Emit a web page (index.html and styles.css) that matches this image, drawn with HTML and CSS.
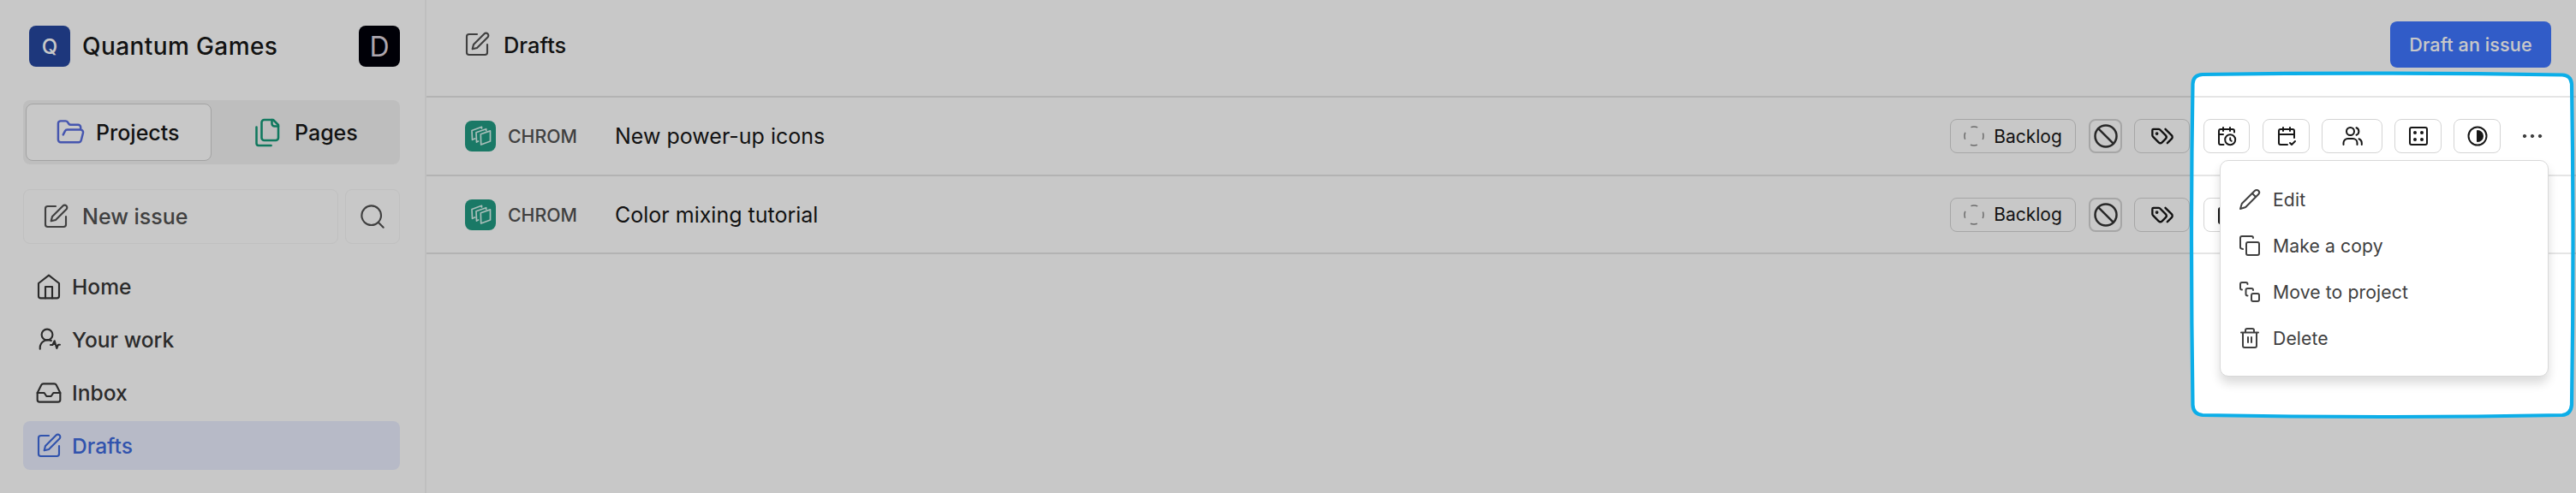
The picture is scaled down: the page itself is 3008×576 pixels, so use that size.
FILE: index.html
```html
<!DOCTYPE html>
<html lang="en">
<head>
<meta charset="utf-8">
<title>Drafts</title>
<link rel="stylesheet" href="styles.css">
</head>
<body>
<svg class="defs" width="0" height="0">
  <symbol id="compose" viewBox="0 0 24 24"><path d="M12 3H5a2 2 0 0 0-2 2v14a2 2 0 0 0 2 2h14a2 2 0 0 0 2-2v-7"/><path d="M18.375 2.625a2.121 2.121 0 1 1 3 3L12 15l-4 1 1-4Z"/></symbol>
  <symbol id="project" viewBox="0 0 36 36"><path d="M11.500 21 8.500 22.300 8 11.500 19.500 7.300V9M15.500 24 13.500 25 13 13.700 24.700 9.700V11.500M18.300 15.700 29.500 11.900V24L18.700 28Z"/></symbol>
  <symbol id="ban" viewBox="0 0 24 24"><circle cx="12" cy="12" r="10"/><path d="m4.900 4.900 14.200 14.200"/></symbol>
  <symbol id="tags" viewBox="0 0 24 24"><path d="m15 5 6.300 6.300a2.400 2.400 0 0 1 0 3.400L17 19"/><path d="M9.586 5.586A2 2 0 0 0 8.172 5H3a1 1 0 0 0-1 1v5.172a2 2 0 0 0 .586 1.414L8.290 18.290a2.426 2.426 0 0 0 3.420 0l3.580-3.580a2.426 2.426 0 0 0 0-3.420z"/><circle cx="6.500" cy="9.500" r=".6" fill="currentColor"/></symbol>
  <symbol id="cal-clock" viewBox="0 0 24 24"><path d="M21 7.500V6a2 2 0 0 0-2-2H5a2 2 0 0 0-2 2v14a2 2 0 0 0 2 2h3.500M16 2v4M8 2v4M3 10h5M17.700 17.800 16.200 16.500V14.300"/><circle cx="16.200" cy="16.300" r="6"/></symbol>
  <symbol id="cal-check" viewBox="0 0 24 24"><path d="M8 2v4M16 2v4M21 14V6a2 2 0 0 0-2-2H5a2 2 0 0 0-2 2v14a2 2 0 0 0 2 2h8M3 10h18M16 20l2 2 4-4"/></symbol>
</svg>

<div class="app">
  <aside class="sidebar">
    <header class="workspace">
      <span class="avatar">Q</span>
      <span class="workspace-name">Quantum Games</span>
      <span class="avatar avatar-user">D</span>
    </header>
    <div class="tabs">
      <span class="tab tab-active">
        <svg class="tab-icon folder" viewBox="0 0 24 24"><path d="m6 14 1.500-2.900A2 2 0 0 1 9.240 10H20a2 2 0 0 1 1.940 2.500l-1.540 6a2 2 0 0 1-1.950 1.500H4a2 2 0 0 1-2-2V5a2 2 0 0 1 2-2h3.900a2 2 0 0 1 1.690.9l.81 1.200a2 2 0 0 0 1.670.9H18a2 2 0 0 1 2 2v2"/></svg>
        Projects
      </span>
      <span class="tab tab-pages">
        <svg class="tab-icon files" viewBox="0 0 24 24"><path d="M20 7h-3a2 2 0 0 1-2-2V2"/><path d="M9 18a2 2 0 0 1-2-2V4a2 2 0 0 1 2-2h7l4 4v10a2 2 0 0 1-2 2Z"/><path d="M3 7.600v12.800A1.600 1.600 0 0 0 4.600 22h9.800"/></svg>
        Pages
      </span>
    </div>
    <div class="quick">
      <span class="new-issue"><svg class="icon-32"><use href="#compose"/></svg>New issue</span>
      <span class="search"><svg class="icon-32" viewBox="0 0 24 24"><circle cx="11" cy="11" r="8.500"/><path d="m21.500 21.500-4.500-4.500"/></svg></span>
    </div>
    <nav class="nav">
      <a class="nav-item"><svg class="icon-32" viewBox="0 0 24 24"><path d="m3 9 9-7 9 7v11a2 2 0 0 1-2 2H5a2 2 0 0 1-2-2z"/><path d="M9 22V12h6v10"/></svg>Home</a>
      <a class="nav-item"><svg class="icon-32" viewBox="0 0 24 24"><circle cx="10.500" cy="7.500" r="4.800"/><path d="M4.300 20v-1a6.800 6.800 0 0 1 9.800-6.200"/><path d="M13.500 16.500h1.800l1.700-3.500 2 6.500 1.200-3.200h1.500" fill="currentColor"/></svg>Your work</a>
      <a class="nav-item"><svg class="icon-32" viewBox="0 0 24 24"><path d="M22 12h-6l-2 3h-4l-2-3H2"/><path d="M5.450 5.110 2 12v6a2 2 0 0 0 2 2h16a2 2 0 0 0 2-2v-6l-3.450-6.890A2 2 0 0 0 16.760 4H7.240a2 2 0 0 0-1.790 1.110z"/></svg>Inbox</a>
      <a class="nav-item nav-active"><svg class="icon-32"><use href="#compose"/></svg>Drafts</a>
    </nav>
  </aside>

  <main class="main">
    <header class="topbar">
      <svg class="icon-32"><use href="#compose"/></svg>
      <h1 class="title">Drafts</h1>
      <button class="primary">Draft an issue</button>
    </header>
    <section class="row row-first">
      <span class="project"><svg><use href="#project"/></svg></span>
      <span class="key">CHROM</span>
      <span class="name">New power-up icons</span>
      <div class="props">
        <span class="chip state"><svg class="backlog" viewBox="0 0 24 24"><circle cx="12" cy="12" r="11"/></svg>Backlog</span>
        <span class="chip priority"><svg><use href="#ban"/></svg></span>
        <span class="chip labels"><svg><use href="#tags"/></svg></span>
        <span class="chip start"><svg><use href="#cal-clock"/></svg></span>
        <span class="chip due"><svg><use href="#cal-check"/></svg></span>
        <span class="chip members"><svg viewBox="0 0 24 24"><path d="M1.500 22v-2a5 5 0 0 1 5-5h6a5 5 0 0 1 5 5v2"/><circle cx="9.500" cy="6.500" r="4.500"/><path d="M16.500 2.300a4.500 4.500 0 0 1 0 8.400M19.500 15.300c2.200.8 3.300 2.700 3.300 4.700v2"/></svg></span>
        <span class="chip cycle"><svg viewBox="0 0 24 24"><rect x="2" y="2" width="20" height="20" rx="2"/><g fill="currentColor"><circle cx="8" cy="8" r="1"/><circle cx="16" cy="8" r="1"/><circle cx="8" cy="16" r="1"/><circle cx="16" cy="16" r="1"/></g></svg></span>
        <span class="chip module"><svg viewBox="0 0 24 24"><circle cx="12" cy="12" r="10.500"/><path d="M12 6a6 6 0 0 1 0 12z" fill="currentColor"/></svg></span>
        <span class="more"><svg viewBox="0 0 24 24"><circle cx="3" cy="12" r="1.700"/><circle cx="12" cy="12" r="1.700"/><circle cx="21" cy="12" r="1.700"/></svg></span>
      </div>
    </section>
    <section class="row">
      <span class="project"><svg><use href="#project"/></svg></span>
      <span class="key">CHROM</span>
      <span class="name">Color mixing tutorial</span>
      <div class="props">
        <span class="chip state"><svg class="backlog" viewBox="0 0 24 24"><circle cx="12" cy="12" r="11"/></svg>Backlog</span>
        <span class="chip priority"><svg><use href="#ban"/></svg></span>
        <span class="chip labels"><svg><use href="#tags"/></svg></span>
        <span class="chip start"><svg><use href="#cal-clock"/></svg></span>
        <span class="chip due"></span>
        <span class="chip members"></span>
        <span class="chip cycle"></span>
        <span class="chip module"></span>
        <span class="more"></span>
      </div>
    </section>
  </main>
</div>

<div class="menu">
  <a class="menu-item"><svg viewBox="0 0 24 24"><path d="M22.200 6a1 1 0 0 0-4.200-4.200L3.200 16.500a2 2 0 0 0-.5.830L1 23l5.700-1.700a2 2 0 0 0 .830-.5z"/><path d="m15 5 4 4"/></svg>Edit</a>
  <a class="menu-item"><svg viewBox="0 0 24 24"><rect x="8" y="8" width="15" height="15" rx="2"/><path d="M4 16c-1.500-.2-3-1-3-2V3a2 2 0 0 1 2-2h11c1.300 0 2 1 2 2"/></svg>Make a copy</a>
  <a class="menu-item"><svg viewBox="0 0 24 24"><rect x="14" y="14" width="9" height="9" rx="2"/><path d="M3 9.500c-1 0-2-.8-2-2V3a2 2 0 0 1 2-2h4.500c1.200 0 2 .8 2 2M9.500 16.500c-1.200 0-2-.8-2-2v-4.500a2 2 0 0 1 2-2H14c1.200 0 2 .8 2 2"/></svg>Move to project</a>
  <a class="menu-item"><svg viewBox="0 0 24 24"><path d="M2 5.500h20M20 5.500V21a2 2 0 0 1-2 2H6a2 2 0 0 1-2-2V5.500M7 5.500V3a2 2 0 0 1 2-2h6a2 2 0 0 1 2 2v2.500M10 11v6M14 11v6"/></svg>Delete</a>
</div>

<svg class="spotlight" viewBox="0 0 3008 576">
  <path class="shade" fill-rule="evenodd" d="M0 0H3008V576H0ZM2572 87Q2780 84 2992 87.500Q3002 88 3003 98Q3006 280 3003 473Q3002 484 2992 485Q2780 489 2572 485Q2561 484 2560.500 473Q2557.500 280 2560.500 98Q2561 87.500 2572 87Z"/>
  <path class="outline" d="M2572 87Q2780 84 2992 87.500Q3002 88 3003 98Q3006 280 3003 473Q3002 484 2992 485Q2780 489 2572 485Q2561 484 2560.500 473Q2557.500 280 2560.500 98Q2561 87.500 2572 87Z"/>
</svg>
</body>
</html>
```
FILE: styles.css
```css
* { box-sizing: border-box; }
body {
  margin: 0;
  width: 3008px;
  height: 576px;
  overflow: hidden;
  background: #fff;
  color: #171717;
  font-family: Inter, "Liberation Sans", sans-serif;
  font-size: 25px;
}
svg {
  display: block;
  flex: none;
  fill: none;
  stroke: currentColor;
  stroke-width: 2;
  stroke-linecap: round;
  stroke-linejoin: round;
  overflow: visible;
}
.defs { position: absolute; }
.icon-32 { width: 32px; height: 32px; stroke-width: 1.6; }
.app { display: flex; height: 576px; }

.sidebar {
  width: 498px;
  border-right: 2px solid #f4f4f4;
  padding: 30px 29px 0 27px;
}
.workspace { display: flex; align-items: center; height: 48px; padding-left: 7px; }
.avatar {
  width: 48px;
  height: 48px;
  border-radius: 8px;
  background: #26479e;
  color: #fff;
  font-size: 24px;
  font-weight: 500;
  display: flex;
  align-items: center;
  justify-content: center;
}
.avatar-user { margin-left: auto; background: #000009; color: #dcd3dd; font-size: 32px; font-weight: 400; }
.workspace-name { margin-left: 14px; font-size: 28px; font-weight: 500; letter-spacing: 0.4px; }
.tabs {
  display: flex;
  margin-top: 39px;
  height: 75px;
  border-radius: 8px;
  background: #f3f3f3;
  padding: 4px 3px;
}
.tab { display: flex; align-items: center; font-weight: 500; }
.tab-active {
  width: 217px;
  padding-left: 36px;
  border: 1px solid #d0d0d0;
  border-radius: 8px;
  background: #fff;
}
.tab-icon { stroke-width: 1.7; }
.folder { width: 35px; height: 35px; color: #5a6ee0; margin-right: 12px; margin-left: -2px; }
.files { width: 36px; height: 36px; color: #159a78; margin-right: 13px; }
.tab-pages { padding-left: 48px; }
.quick { display: flex; gap: 8px; margin-top: 29px; height: 64px; }
.new-issue, .search { display: flex; align-items: center; border: 1px solid #f5f5f5; border-radius: 8px; color: #525252; }
.new-issue { width: 368px; padding-left: 21px; gap: 15px; font-weight: 500; }
.search { width: 64px; justify-content: center; }
.nav { display: flex; flex-direction: column; gap: 5px; margin-top: 21px; }
.nav-item {
  height: 57px;
  padding-left: 14px;
  display: flex;
  align-items: center;
  gap: 11px;
  border-radius: 8px;
  color: #383838;
  font-size: 24.6px;
  font-weight: 500;
}
.nav-active { background: #eaeefe; color: #3f6add; }

.main { flex: 1; }
.topbar { height: 114px; padding: 0 29px 8px 43px; display: flex; align-items: center; border-bottom: 2px solid #e5e5e5; color: #525252; }
.title { margin: 0 0 0 15px; color: #171717; font-size: 25.4px; font-weight: 500; }
.primary {
  margin-left: auto;
  width: 188px;
  height: 54px;
  border: 0;
  border-radius: 8px;
  background: #3f76ff;
  color: #fff;
  font: 500 21.600px Inter, sans-serif;
  letter-spacing: 0.1px;
}
.row { height: 91px; border-bottom: 2px solid #e5e5e5; padding: 0 39px 0 45px; display: flex; align-items: center; }
.row-first { height: 92px; }
.project { width: 36px; height: 36px; border-radius: 8px; background: #229b83; color: #d7f2ec; }
.project svg { width: 36px; height: 36px; stroke-width: 1.7; }
.key { width: 110px; margin-left: 14px; color: #525252; font-size: 21.300px; font-weight: 500; }
.name { margin-left: 15px; }
.props { margin-left: auto; display: flex; align-items: center; }
.chip {
  height: 40px;
  border: 1px solid #d4d4d4;
  border-radius: 8px;
  display: flex;
  align-items: center;
  justify-content: center;
}
.chip svg { width: 24px; height: 24px; }
.state { width: 147px; gap: 11px; font-size: 21px; margin-right: 15px; }
.chip .backlog { color: #8a8a8a; stroke-width: 1.5; stroke-dasharray: 8 9.280; stroke-dashoffset: 4; stroke-linecap: butt; }
.priority { width: 39px; border: 2px solid #d4d4d4; margin-right: 14px; color: #333; }
.chip.priority svg { width: 30px; height: 30px; }
.labels { width: 65px; margin-right: 16px; }
.chip.labels svg { width: 28px; height: 28px; }
.start { width: 54px; margin-right: 15px; }
.due { width: 55px; margin-right: 14px; }
.members { width: 71px; margin-right: 14px; }
.cycle { width: 55px; margin-right: 14px; }
.module { width: 55px; margin-right: 25px; }
.more { width: 24px; }
.more svg { width: 24px; height: 24px; fill: #404040; stroke: #404040; stroke-width: 1; }

.menu {
  position: absolute;
  left: 2592px;
  top: 187px;
  width: 384px;
  height: 253px;
  padding: 18px 22px;
  border: 1px solid #d9d9d9;
  border-radius: 10px;
  background: #fff;
  box-shadow: 0 8px 12px rgba(0, 0, 0, 0.14);
}
.menu-item { height: 54px; display: flex; align-items: center; gap: 15px; color: #404040; font-size: 21.200px; letter-spacing: 0.1px; }
.menu-item svg { width: 24px; height: 24px; }
.spotlight { position: absolute; inset: 0; width: 3008px; height: 576px; pointer-events: none; }
.shade { fill: rgba(0, 0, 0, 0.215); stroke: none; }
.outline { stroke: #0caee8; stroke-width: 4.200; }
```
